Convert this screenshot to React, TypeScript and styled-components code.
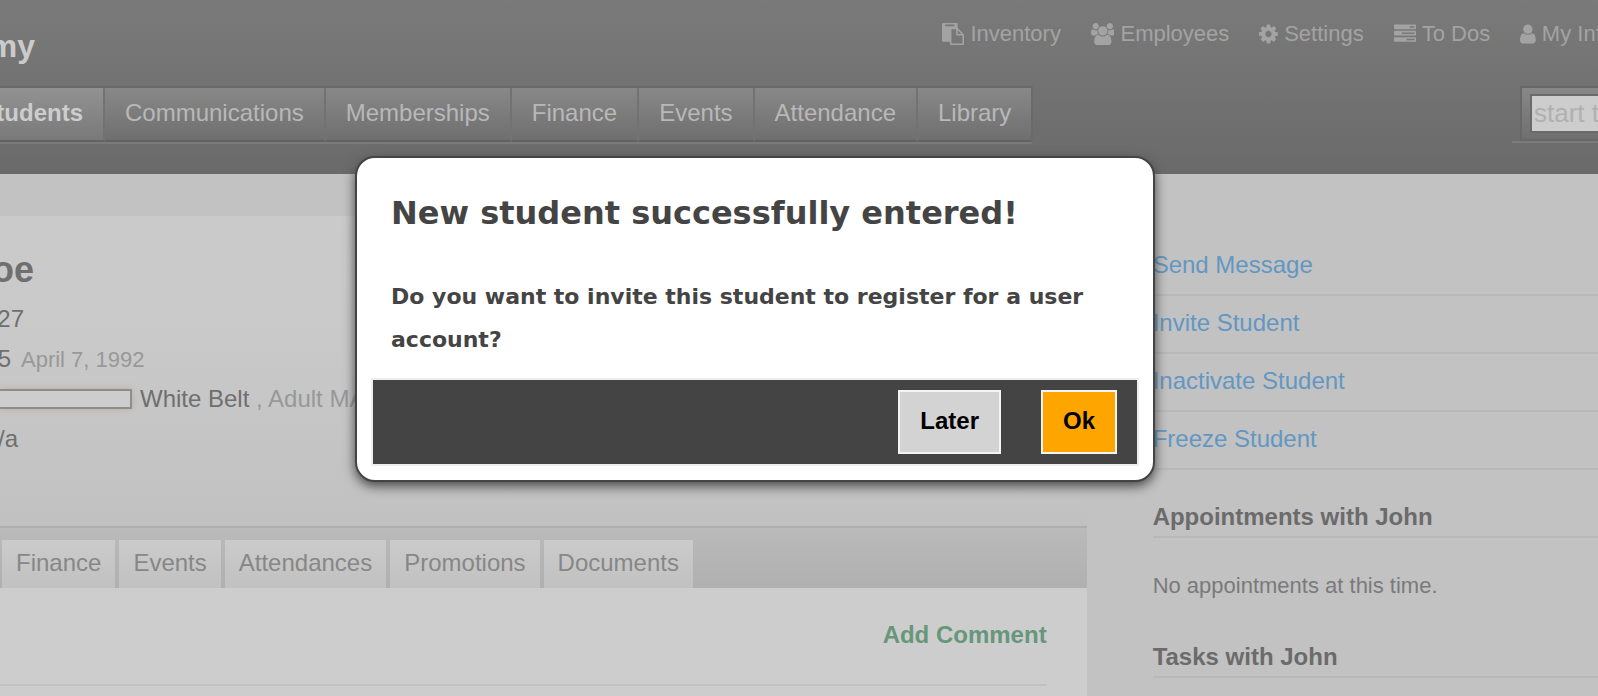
import React from "react";
import styled, { createGlobalStyle, css } from "styled-components";

const Global = createGlobalStyle`
  * { box-sizing: border-box; }
  body {
    margin: 0;
    background: #c2c2c2;
    font-family: "Liberation Sans", Arial, sans-serif;
    font-size: 24px;
    color: #6f6f6f;
  }
  a { color: inherit; text-decoration: none; }
  h1, h2, h3, p, ul { margin: 0; padding: 0; }
`;

const Page = styled.div`
  position: relative;
  height: 100vh;
  overflow: hidden;
`;

const Header = styled.header`
  height: 174px;
  background: linear-gradient(#7a7a7a, #6a6a6a);
`;

const TopRow = styled.div`
  display: flex;
  justify-content: space-between;
  height: 86px;
`;

/* Right-aligned text whose beginning runs past the left edge of its box. */
const Clip = styled.span<{ $width: number }>`
  display: flex;
  flex: none;
  justify-content: flex-end;
  width: ${(p) => p.$width}px;
`;

const Brand = styled.h1`
  padding-top: 28px;
  color: #cbcbcb;
  font-size: 32px;
  line-height: 36px;
`;

const Utility = styled.nav`
  display: flex;
  gap: 30px;
  padding-top: 20px;
  margin-right: -16px;
  color: #a3a3a3;
  font-size: 22px;
  line-height: 28px;
  white-space: nowrap;
`;

const UtilityLink = styled.a`
  display: flex;
  align-items: center;
  gap: 6px;
  height: 28px;
`;

const Glyph = styled.svg`
  display: block;
  height: 22px;
  fill: currentColor;
`;

const NavRow = styled.div`
  display: flex;
  justify-content: space-between;
`;

const MainNav = styled.nav`
  display: flex;
  height: 58px;
  border: solid #6a6a6a;
  border-width: 2px 2px 0 0;
  border-bottom: 2px solid #7b7b7b;
`;

const NavItem = styled.a<{ $active?: boolean }>`
  padding: 0 20px;
  border-right: 2px solid #727272;
  border-bottom: 2px solid #626262;
  background: linear-gradient(#888888, #6f6f6f);
  background-clip: padding-box;
  color: #b8b8b8;
  line-height: 50px;
  &:last-child { border-right: 0; }
  ${(p) =>
    p.$active &&
    css`
      padding-left: 0;
      background: linear-gradient(#929292, #797979);
      color: #cdcdcd;
      font-weight: bold;
    `}
`;

const SearchWrap = styled.form`
  width: 86px;
  padding-left: 8px;
  border-bottom: 2px solid #7b7b7b;
  height: 57px;
  overflow: hidden;
`;

const SearchBox = styled.label`
  display: block;
  width: 260px;
  height: 55px;
  padding: 6px 8px;
  border: 2px solid #686868;
  background: linear-gradient(#888888, #6f6f6f);
`;

const SearchInput = styled.input`
  display: block;
  width: 100%;
  height: 39px;
  padding: 0 2px;
  border: 2px solid #6a6a6a;
  border-radius: 0;
  background: #cdcdcd;
  font: 26px "Liberation Sans", Arial, sans-serif;
  &::placeholder { color: #b0b0b0; opacity: 1; }
`;

const Columns = styled.div`
  display: flex;
  gap: 66px;
`;

const Main = styled.main`
  flex: 0 0 68%;
  min-width: 0;
  padding-top: 42px;
`;

const Profile = styled.section`
  height: 310px;
  padding-top: 32px;
  background: linear-gradient(#cacaca 0%, #c9c9c9 40%, #c1c1c1 100%);
`;

const Name = styled.h2`
  margin-bottom: 7px;
  font-size: 36px;
  line-height: 44px;
`;

const Line = styled.p`
  display: flex;
  align-items: baseline;
  height: 40px;
  line-height: 40px;
  white-space: pre;
`;

const Muted = styled.span<{ $small?: boolean }>`
  color: #989898;
  font-size: ${(p) => (p.$small ? 22 : 24)}px;
  ${(p) => p.$small && "margin-left: 10px;"}
`;

const Belt = styled.span`
  align-self: center;
  width: 132px;
  height: 20px;
  margin-right: 8px;
  border: 2px solid #8f8d8b;
  border-left: 0;
  background: #cdcdcd;
  box-shadow: 0 0 6px #bcae9b;
`;

const Tabs = styled.nav`
  display: flex;
  gap: 4px;
  height: 62px;
  padding: 12px 0 0 2px;
  border-top: 2px solid #aeaeae;
  background: linear-gradient(#bababa, #b0b0b0);
`;

const Tab = styled.a`
  padding: 0 14px;
  background: linear-gradient(#cbcbcb, #c1c1c1);
  color: #878787;
  line-height: 46px;
`;

const Comments = styled.section`
  height: 200px;
  padding: 32px 40px 0 0;
  background: #cdcdcd;
`;

const CommentBar = styled.div`
  display: flex;
  justify-content: flex-end;
  height: 66px;
  border-bottom: 2px solid #c1c1c1;
  line-height: 30px;
`;

const AddComment = styled.a`
  color: #66977b;
  font-weight: bold;
`;

const Side = styled.aside`
  flex: 1;
  min-width: 0;
  padding-top: 64px;
`;

const Actions = styled.ul`
  list-style: none;
`;

const Action = styled.li`
  border-bottom: 2px solid #b8b8b8;
  color: #6397c2;
  line-height: 54px;
  height: 58px;
`;

const SideTitle = styled.h3`
  height: 68px;
  padding-top: 28px;
  border-bottom: 2px solid #b8b8b8;
  font-size: 24px;
  line-height: 38px;
  color: #6b6b6b;
`;

const Empty = styled.p`
  height: 72px;
  padding-top: 32px;
  color: #7a7a7a;
  font-size: 22px;
  line-height: 32px;
`;

const Dialog = styled.div`
  position: absolute;
  top: 156px;
  left: calc(50% - 444px);
  width: 800px;
  padding: 14px;
  border: 2px solid #444;
  border-radius: 20px;
  background: #fff;
  box-shadow: 0 4px 12px #444;
  color: #444;
  font-family: Verdana, "DejaVu Sans", sans-serif;
  font-weight: bold;
`;

const DialogBody = styled.div`
  padding: 0 20px;
`;

const DialogTitle = styled.h2`
  padding-top: 20px;
  font-size: 32px;
  line-height: 42px;
`;

const DialogText = styled.p`
  padding: 41px 0 17px;
  font-size: 22px;
  line-height: 43px;
`;

const DialogFooter = styled.div`
  display: flex;
  justify-content: flex-end;
  gap: 40px;
  padding: 10px 20px;
  border: 2px solid #eee;
  background: #444;
`;

const DialogButton = styled.button<{ $primary?: boolean }>`
  height: 64px;
  padding: 0 20px 2px;
  border: 2px solid #f4f4f4;
  background: ${(p) => (p.$primary ? "#ffa500" : "#d3d3d3")};
  color: #000;
  font: bold 24px "Liberation Sans", Arial, sans-serif;
`;

const icons = {
  paste: {
    box: "0 0 1792 1792",
    d: "M768 1664h896v-640h-416q-40 0-68-28t-28-68v-416h-384v1152zm256-1440v-64q0-13-9.5-22.5t-22.5-9.5h-704q-13 0-22.5 9.5t-9.5 22.5v64q0 13 9.5 22.5t22.5 9.5h704q13 0 22.5-9.5t9.5-22.5zm256 672h299l-299-299v299zm512 128v672q0 40-28 68t-68 28h-960q-40 0-68-28t-28-68v-160h-544q-40 0-68-28t-28-68v-1344q0-40 28-68t68-28h1088q40 0 68 28t28 68v328q21 13 36 28l408 408q28 28 48 76t20 88z",
  },
  users: {
    box: "0 0 1920 1792",
    d: "M593 896q-162 5-265 128h-134q-82 0-138-40.5t-56-118.5q0-353 124-353 6 0 43.5 21t97.5 42.5 119 21.5q67 0 133-23-5 37-5 66 0 139 81 256zm1071 637q0 120-73 189.5t-194 69.5h-874q-121 0-194-69.5t-73-189.5q0-53 3.5-103.5t14-109 26.5-108.5 43-97.5 62-81 85.5-53.5 111.5-20q10 0 43 21.5t73 48 107 48 135 21.5 135-21.5 107-48 73-48 43-21.5q61 0 111.5 20t85.5 53.5 62 81 43 97.5 26.5 108.5 14 109 3.5 103.5zm-1024-1277q0 106-75 181t-181 75-181-75-75-181 75-181 181-75 181 75 75 181zm704 384q0 159-112.5 271.5t-271.5 112.5-271.5-112.5-112.5-271.5 112.5-271.5 271.5-112.5 271.5 112.5 112.5 271.5zm576 225q0 78-56 118.5t-138 40.5h-134q-103-123-265-128 81-117 81-256 0-29-5-66 66 23 133 23 59 0 119-21.5t97.5-42.5 43.5-21q124 0 124 353zm-128-609q0 106-75 181t-181 75-181-75-75-181 75-181 181-75 181 75 75 181z",
  },
  cog: {
    box: "128 0 1536 1792",
    d: "M1152 896q0-106-75-181t-181-75-181 75-75 181 75 181 181 75 181-75 75-181zm512-109v222q0 12-8 23t-20 13l-185 28q-19 54-39 91 35 50 107 138 10 12 10 25t-9 23q-27 37-99 108t-94 71q-12 0-26-9l-138-108q-44 23-91 38-16 136-29 186-7 28-36 28h-222q-14 0-24.5-8.5t-11.5-21.5l-28-184q-49-16-90-37l-141 107q-10 9-25 9-14 0-25-11-126-114-165-168-7-10-7-23 0-12 8-23 15-21 51-66.5t54-70.5q-27-50-41-99l-183-27q-13-2-21-12.5t-8-23.5v-222q0-12 8-23t19-13l186-28q14-46 39-92-40-57-107-138-10-12-10-24 0-10 9-23 26-36 98.5-107.5t94.5-71.5q13 0 26 10l138 107q44-23 91-38 16-136 29-186 7-28 36-28h222q14 0 24.5 8.5t11.5 21.5l28 184q49 16 90 37l142-107q9-9 24-9 13 0 25 10 129 119 165 170 7 8 7 22 0 12-8 23-15 21-51 66.5t-54 70.5q26 50 41 98l183 28q13 2 21 12.5t8 23.5z",
  },
  tasks: {
    box: "0 0 1792 1792",
    d: "M1024 1408h640v-128h-640v128zm-384-512h1024v-128h-1024v128zm640-512h384v-128h-384v128zm512 832v256q0 26-19 45t-45 19h-1664q-26 0-45-19t-19-45v-256q0-26 19-45t45-19h1664q26 0 45 19t19 45zm0-512v256q0 26-19 45t-45 19h-1664q-26 0-45-19t-19-45v-256q0-26 19-45t45-19h1664q26 0 45 19t19 45zm0-512v256q0 26-19 45t-45 19h-1664q-26 0-45-19t-19-45v-256q0-26 19-45t45-19h1664q26 0 45 19t19 45z",
  },
  user: {
    box: "256 0 1280 1792",
    d: "M1536 1399q0 109-62.5 187t-150.5 78h-854q-88 0-150.5-78t-62.5-187q0-85 8.5-160.5t31.5-152 58.5-131 94-89 134.5-34.5q131 128 313 128t313-128q76 0 134.5 34.5t94 89 58.5 131 31.5 152 8.5 160.5zm-256-887q0 159-112.5 271.5t-271.5 112.5-271.5-112.5-112.5-271.5 112.5-271.5 271.5-112.5 271.5 112.5 112.5 271.5z",
  },
};

const utilities: { icon: keyof typeof icons; label: string }[] = [
  { icon: "paste", label: "Inventory" },
  { icon: "users", label: "Employees" },
  { icon: "cog", label: "Settings" },
  { icon: "tasks", label: "To Dos" },
  { icon: "user", label: "My Info" },
];

const sections = ["Communications", "Memberships", "Finance", "Events", "Attendance", "Library"];
const tabs = ["Finance", "Events", "Attendances", "Promotions", "Documents"];
const actions = ["Send Message", "Invite Student", "Inactivate Student", "Freeze Student"];

export default function App() {
  return (
    <Page>
      <Global />
      <Header>
        <TopRow>
          <Brand>
            <Clip $width={35}>my</Clip>
          </Brand>
          <Utility>
            {utilities.map(({ icon, label }) => (
              <UtilityLink href="#" key={label}>
                <Glyph viewBox={icons[icon].box} aria-hidden="true">
                  <path d={icons[icon].d} />
                </Glyph>
                {label}
              </UtilityLink>
            ))}
          </Utility>
        </TopRow>
        <NavRow>
          <MainNav>
            <NavItem href="#" $active>
              <Clip $width={83}>tudents</Clip>
            </NavItem>
            {sections.map((s) => (
              <NavItem href="#" key={s}>
                {s}
              </NavItem>
            ))}
          </MainNav>
          <SearchWrap>
            <SearchBox>
              <SearchInput type="text" placeholder="start typing" aria-label="Search" />
            </SearchBox>
          </SearchWrap>
        </NavRow>
      </Header>
      <Columns>
        <Main>
          <Profile>
            <Name>
              <Clip $width={34}>oe</Clip>
            </Name>
            <Line>
              <Clip $width={24}>27</Clip>
            </Line>
            <Line>
              <Clip $width={11}>5</Clip>
              <Muted $small>April 7, 1992</Muted>
            </Line>
            <Line>
              <Belt />
              White Belt<Muted> , Adult MA</Muted>
            </Line>
            <Line>
              <Clip $width={18}>/a</Clip>
            </Line>
          </Profile>
          <Tabs>
            {tabs.map((t) => (
              <Tab href="#" key={t}>
                {t}
              </Tab>
            ))}
          </Tabs>
          <Comments>
            <CommentBar>
              <AddComment href="#">Add Comment</AddComment>
            </CommentBar>
          </Comments>
        </Main>
        <Side>
          <Actions>
            {actions.map((a) => (
              <Action key={a}>
                <a href="#">{a}</a>
              </Action>
            ))}
          </Actions>
          <SideTitle>Appointments with John</SideTitle>
          <Empty>No appointments at this time.</Empty>
          <SideTitle>Tasks with John</SideTitle>
        </Side>
      </Columns>
      <Dialog role="dialog" aria-labelledby="dialog-title">
        <DialogBody>
          <DialogTitle id="dialog-title">New student successfully entered!</DialogTitle>
          <DialogText>Do you want to invite this student to register for a user account?</DialogText>
        </DialogBody>
        <DialogFooter>
          <DialogButton type="button">Later</DialogButton>
          <DialogButton type="button" $primary>
            Ok
          </DialogButton>
        </DialogFooter>
      </Dialog>
    </Page>
  );
}
